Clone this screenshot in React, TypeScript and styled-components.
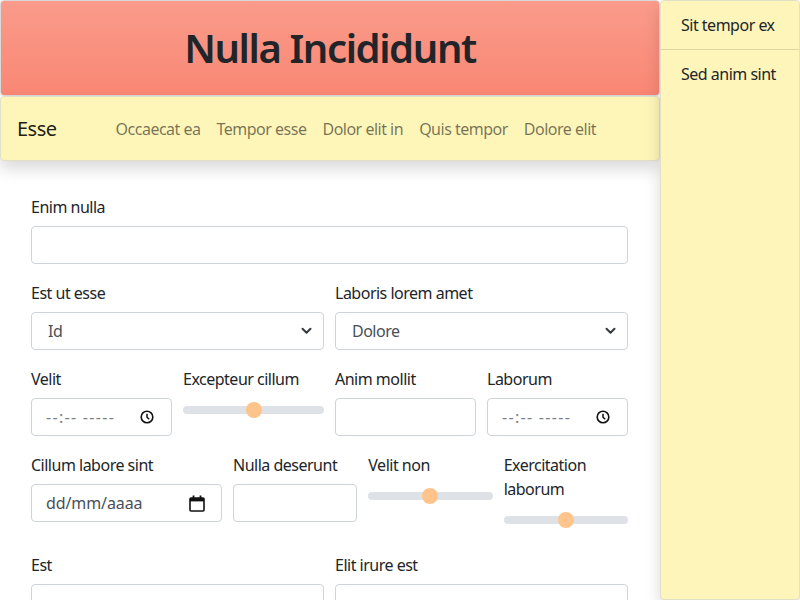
import React from "react";
import styled, { createGlobalStyle } from "styled-components";

const Global = createGlobalStyle`
  html, body { margin: 0; padding: 0; background: #fff; }
  body {
    font-family: "Noto Sans", "Open Sans", sans-serif;
    font-size: 16px;
    line-height: 24px;
    letter-spacing: -0.5px;
    color: #212529;
    overflow: hidden;
  }
  * { box-sizing: border-box; }
`;

const Page = styled.div`
  display: flex;
  width: 800px;
  height: 600px;
  overflow: hidden;
`;

const Main = styled.div`
  width: 660px;
  flex: none;
  display: flex;
  flex-direction: column;
`;

const Header = styled.header`
  flex: none;
  height: 96px;
  border: 1px solid #d9d9d9;
  border-radius: 4px;
  background: linear-gradient(#fa9b8b, #f98774);
  display: flex;
  align-items: center;
  justify-content: center;
`;

const Title = styled.h1`
  margin: 0;
  font-size: 40px;
  font-weight: 600;
  line-height: 48px;
  letter-spacing: -1.4px;
  color: #212529;
`;

const Navbar = styled.nav`
  flex: none;
  height: 65px;
  border: 1px solid #e3e0c8;
  border-radius: 4px;
  background: #fef5b9;
  box-shadow: 0 8px 16px rgba(0, 0, 0, 0.15);
  display: flex;
  align-items: center;
  padding: 0 16px;
  position: relative;
  z-index: 1;
`;

const Brand = styled.span`
  font-size: 20px;
  line-height: 30px;
  color: rgba(0, 0, 0, 0.9);
  margin-right: 51px;
`;

const NavLink = styled.a`
  padding: 8px;
  color: rgba(0, 0, 0, 0.55);
  text-decoration: none;
`;

const Form = styled.form`
  flex: none;
  padding: 34px 32px 0 31px;
  display: flex;
  flex-direction: column;
`;

const Row = styled.div<{ $cols: string; $mb?: number }>`
  display: grid;
  grid-template-columns: ${(p) => p.$cols};
  column-gap: 11px;
  margin-bottom: ${(p) => p.$mb ?? 17}px;
  align-items: start;
`;

const Group = styled.div`
  display: flex;
  flex-direction: column;
  min-width: 0;
`;

const Label = styled.label`
  display: block;
  margin-bottom: 7px;
  line-height: 24px;
`;

const TextInput = styled.input`
  height: 38px;
  width: 100%;
  border: 1px solid #ced4da;
  border-radius: 4px;
  padding: 6px 12px;
  font: inherit;
  color: #212529;
  background: #fff;
`;

const SelectWrap = styled.div`
  position: relative;
`;

const Select = styled.select`
  appearance: none;
  width: 100%;
  height: 38px;
  border: 1px solid #ced4da;
  border-radius: 4px;
  padding: 6px 36px 6px 16px;
  font: inherit;
  letter-spacing: -0.5px;
  color: #495057;
  background: #fff;
`;

const Chevron = styled.svg`
  position: absolute;
  right: 12px;
  top: 15px;
  pointer-events: none;
`;

const FakeInput = styled.div<{ $dark?: boolean; $pad: number }>`
  height: 38px;
  border: 1px solid #ced4da;
  border-radius: 4px;
  background: #fff;
  display: flex;
  align-items: center;
  justify-content: space-between;
  padding: 0 ${(p) => p.$pad}px 0 14px;
  color: ${(p) => (p.$dark ? "#495057" : "#7a7f85")};
  letter-spacing: ${(p) => (p.$dark ? "-0.1px" : "1.3px")};
`;

const Range = styled.input`
  appearance: none;
  -webkit-appearance: none;
  width: 100%;
  height: 24px;
  margin: 0;
  padding: 0;
  background: transparent;
  &::-webkit-slider-runnable-track {
    height: 8px;
    border-radius: 4px;
    background: #dee2e6;
  }
  &::-webkit-slider-thumb {
    -webkit-appearance: none;
    width: 16px;
    height: 16px;
    border-radius: 50%;
    background: #fec48b;
    border: 0;
    margin-top: -4px;
  }
`;

const Sidebar = styled.aside`
  flex: 1;
  background: #fef5bb;
  border: 1px solid #e3e0c8;
  border-radius: 4px;
  box-shadow: 0 8px 16px rgba(0, 0, 0, 0.15);
  display: flex;
  flex-direction: column;
  position: relative;
  z-index: 2;
`;

const SideItem = styled.div<{ $last?: boolean }>`
  padding: 12px 20px;
  line-height: 24px;
  white-space: nowrap;
  border-bottom: ${(p) => (p.$last ? "none" : "1px solid rgba(0,0,0,0.125)")};
`;

const ClockIcon = () => (
  <svg width="14" height="14" viewBox="0 0 14 14">
    <circle cx="7" cy="7" r="5.8" fill="none" stroke="#111" strokeWidth="1.6" />
    <path d="M7 3.8V7.2L9.2 9.3" fill="none" stroke="#111" strokeWidth="1.5" />
  </svg>
);

const CalendarIcon = () => (
  <svg width="16" height="17" viewBox="0 0 16 17">
    <rect x="1" y="3" width="14" height="13" rx="1" fill="none" stroke="#111" strokeWidth="1.6" />
    <rect x="1" y="3" width="14" height="3.4" fill="#111" />
    <rect x="3.6" y="0.5" width="1.8" height="3" fill="#111" />
    <rect x="10.6" y="0.5" width="1.8" height="3" fill="#111" />
  </svg>
);

const ChevronDown = () => (
  <Chevron width="11" height="8" viewBox="0 0 11 8">
    <path d="M1.5 1.8 5.5 5.8l4-4" fill="none" stroke="#343a40" strokeWidth="2" strokeLinecap="round" strokeLinejoin="round" />
  </Chevron>
);

export default function App() {
  return (
    <Page>
      <Global />
      <Main>
        <Header>
          <Title>Nulla Incididunt</Title>
        </Header>
        <Navbar>
          <Brand>Esse</Brand>
          <NavLink href="#">Occaecat ea</NavLink>
          <NavLink href="#">Tempor esse</NavLink>
          <NavLink href="#">Dolor elit in</NavLink>
          <NavLink href="#">Quis tempor</NavLink>
          <NavLink href="#">Dolore elit</NavLink>
        </Navbar>
        <Form>
          <Row $cols="1fr">
            <Group>
              <Label>Enim nulla</Label>
              <TextInput type="text" />
            </Group>
          </Row>
          <Row $cols="1fr 1fr">
            <Group>
              <Label>Est ut esse</Label>
              <SelectWrap>
                <Select defaultValue="Id">
                  <option>Id</option>
                </Select>
                <ChevronDown />
              </SelectWrap>
            </Group>
            <Group>
              <Label>Laboris lorem amet</Label>
              <SelectWrap>
                <Select defaultValue="Dolore">
                  <option>Dolore</option>
                </Select>
                <ChevronDown />
              </SelectWrap>
            </Group>
          </Row>
          <Row $cols="1fr 1fr 1fr 1fr">
            <Group>
              <Label>Velit</Label>
              <FakeInput $pad={17}>
                <span>--:-- -----</span>
                <ClockIcon />
              </FakeInput>
            </Group>
            <Group>
              <Label>Excepteur cillum</Label>
              <Range type="range" defaultValue={50} />
            </Group>
            <Group>
              <Label>Anim mollit</Label>
              <TextInput type="text" />
            </Group>
            <Group>
              <Label>Laborum</Label>
              <FakeInput $pad={17}>
                <span>--:-- -----</span>
                <ClockIcon />
              </FakeInput>
            </Group>
          </Row>
          <Row $cols="191px 1fr 1fr 1fr" $mb={21}>
            <Group>
              <Label>Cillum labore sint</Label>
              <FakeInput $dark $pad={16}>
                <span>dd/mm/aaaa</span>
                <CalendarIcon />
              </FakeInput>
            </Group>
            <Group>
              <Label>Nulla deserunt</Label>
              <TextInput type="text" />
            </Group>
            <Group>
              <Label>Velit non</Label>
              <Range type="range" defaultValue={50} />
            </Group>
            <Group>
              <Label>Exercitation laborum</Label>
              <Range type="range" defaultValue={50} />
            </Group>
          </Row>
          <Row $cols="1fr 1fr">
            <Group>
              <Label>Est</Label>
              <TextInput type="text" />
            </Group>
            <Group>
              <Label>Elit irure est</Label>
              <TextInput type="text" />
            </Group>
          </Row>
        </Form>
      </Main>
      <Sidebar>
        <SideItem>Sit tempor ex</SideItem>
        <SideItem $last>Sed anim sint</SideItem>
      </Sidebar>
    </Page>
  );
}
